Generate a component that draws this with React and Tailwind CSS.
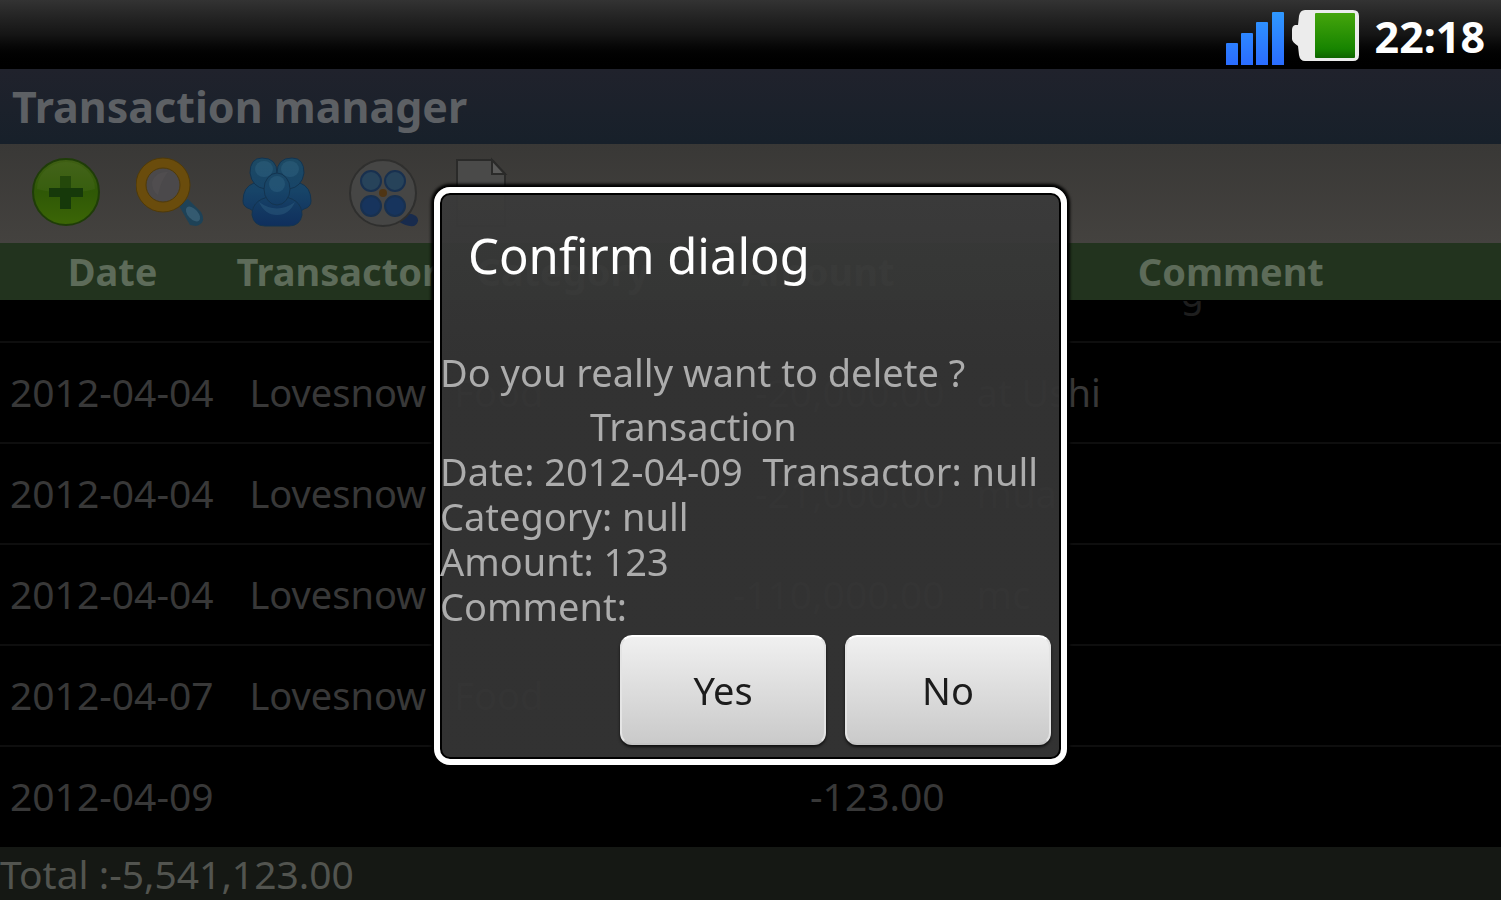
import { useState } from 'react'

const COLUMNS = [
  { name: 'Date', width: 'w-[15%]' },
  { name: 'Transactor', width: 'w-[15%]' },
  { name: 'Category', width: 'w-[15%]' },
  { name: 'Amount', width: 'w-[19%]' },
  { name: 'Comment', width: 'w-[36%]' },
]

const ROWS = [
  { date: '2012-04-04', transactor: 'Lovesnow', category: 'Food', amount: '-20,000.00', comment: 'at Ushi' },
  { date: '2012-04-04', transactor: 'Lovesnow', category: '', amount: '-21,000.00', comment: 'mua' },
  { date: '2012-04-04', transactor: 'Lovesnow', category: '', amount: '-110,000.00', comment: 'mc' },
  { date: '2012-04-07', transactor: 'Lovesnow', category: 'Food', amount: '', comment: '' },
  { date: '2012-04-09', transactor: '', category: '', amount: '-123.00', comment: '' },
]

function SignalIcon() {
  return (
    <svg width="60" height="56" viewBox="0 0 60 56" aria-hidden="true">
      <defs>
        <linearGradient id="signal" x1="0" y1="0" x2="0" y2="56" gradientUnits="userSpaceOnUse">
          <stop offset="0" stopColor="#2f9bff" />
          <stop offset="1" stopColor="#2a6cff" />
        </linearGradient>
      </defs>
      <g fill="url(#signal)">
        <rect x="1" y="34" width="12" height="23" rx="1" />
        <rect x="16" y="24" width="12" height="33" rx="1" />
        <rect x="31" y="13" width="12" height="44" rx="1" />
        <rect x="47" y="3" width="12" height="54" rx="1" />
      </g>
    </svg>
  )
}

function BatteryIcon() {
  return (
    <svg width="68" height="54" viewBox="0 0 68 54" aria-hidden="true">
      <defs>
        <linearGradient id="charge" x1="0" y1="0" x2="0" y2="1">
          <stop offset="0" stopColor="#45a50c" />
          <stop offset="0.8" stopColor="#178400" />
          <stop offset="1" stopColor="#0f6400" />
        </linearGradient>
      </defs>
      <path d="M14 1H62Q68 1 68 7V46Q68 52 62 52H14Q9 52 8 46L7 37Q1 33 1 30V21Q1 17 4 16H7L8 7Q9 1 14 1Z" fill="#ececec" />
      <rect x="24" y="4" width="40" height="45" rx="1" fill="url(#charge)" />
    </svg>
  )
}

function AddIcon() {
  return (
    <svg width="72" height="72" viewBox="0 0 72 72" aria-hidden="true">
      <defs>
        <linearGradient id="add" x1="0" y1="0" x2="0" y2="1">
          <stop offset="0" stopColor="#3f5f14" />
          <stop offset="0.5" stopColor="#2f5806" />
          <stop offset="1" stopColor="#3c6606" />
        </linearGradient>
      </defs>
      <circle cx="36" cy="37" r="33" fill="url(#add)" stroke="#1f3d08" strokeWidth="2" />
      <path d="M7 34a29 27 0 0 1 58 0Q36 42 7 34Z" fill="#5c7a30" opacity="0.2" />
      <path d="M30 21h11v12h-11Z" fill="#24480b" />
      <path d="M19 33h34v9H41v12H30V42H19Z" fill="#16390a" />
    </svg>
  )
}

function SearchIcon() {
  return (
    <svg width="72" height="72" viewBox="0 0 72 72" aria-hidden="true">
      <path d="M42 49L52 44L65 57Q71 68 60 71L54 70Z" fill="#1e4257" />
      <ellipse cx="57" cy="59" rx="5" ry="9" transform="rotate(-42 57 59)" fill="#345a70" />
      <circle cx="27" cy="30" r="22" fill="#4b494b" stroke="#6a4c0c" strokeWidth="10" />
      <circle cx="27" cy="30" r="27" fill="none" stroke="#503a08" strokeWidth="1" />
      <circle cx="27" cy="30" r="17" fill="none" stroke="#503a08" strokeWidth="1" />
      <path d="M16 27Q20 16 32 17Q25 25 22 40Q16 36 16 27Z" fill="#585656" opacity="0.4" />
    </svg>
  )
}

function PeopleIcon() {
  return (
    <svg width="72" height="72" viewBox="0 0 72 72" aria-hidden="true">
      <defs>
        <linearGradient id="people" x1="0" y1="0" x2="0" y2="72" gradientUnits="userSpaceOnUse">
          <stop offset="0" stopColor="#1d4a63" />
          <stop offset="0.5" stopColor="#174468" />
          <stop offset="1" stopColor="#0f2e5c" />
        </linearGradient>
      </defs>
      <g fill="url(#people)" stroke="#133450" strokeWidth="1">
        <path d="M1 46Q1 32 12 28L30 26L34 56Q14 60 8 54Q1 52 1 46Z" />
        <path d="M69 46Q69 32 58 28L40 26L36 56Q56 60 62 54Q69 52 69 46Z" />
        <path d="M8 18Q8 3 20 3Q35 3 35 18Q35 34 23 34Q10 32 8 18Z" />
        <path d="M62 18Q62 3 50 3Q35 3 35 18Q35 34 47 34Q60 32 62 18Z" />
        <path d="M10 60Q10 42 35 41Q60 42 60 60Q58 71 47 71H23Q12 71 10 60Z" />
        <ellipse cx="35" cy="34" rx="13" ry="16" />
      </g>
      <g fill="#3d7391" opacity="0.3">
        <ellipse cx="22" cy="14" rx="9" ry="8" />
        <ellipse cx="48" cy="14" rx="9" ry="8" />
        <ellipse cx="35" cy="29" rx="8" ry="8" />
        <path d="M17 47Q35 60 53 47Q47 60 35 60Q23 60 17 47Z" />
      </g>
    </svg>
  )
}

function ReelIcon() {
  return (
    <svg width="72" height="72" viewBox="0 0 72 72" aria-hidden="true">
      <path d="M50 66Q58 54 68 61Q73 66 66 71Q58 72 50 66Z" fill="#182b4d" />
      <circle cx="35" cy="38" r="33" fill="#464645" stroke="#2f2f2e" strokeWidth="2" />
      <circle cx="23" cy="26" r="10" fill="#27435a" stroke="#18304f" strokeWidth="2" />
      <circle cx="47" cy="26" r="10" fill="#27435a" stroke="#18304f" strokeWidth="2" />
      <circle cx="23" cy="51" r="10" fill="#17345d" stroke="#18304f" strokeWidth="2" />
      <circle cx="47" cy="51" r="10" fill="#17345d" stroke="#18304f" strokeWidth="2" />
      <circle cx="35" cy="38" r="4" fill="#4f3514" />
    </svg>
  )
}

function PageIcon() {
  return (
    <svg width="72" height="72" viewBox="0 0 72 72" aria-hidden="true">
      <path d="M3 5H38L51 19V71H3Z" fill="#4a4a49" stroke="#2a2a29" strokeWidth="2" />
      <path d="M38 5V19H51Z" fill="#5a5a59" stroke="#2a2a29" strokeWidth="2" />
    </svg>
  )
}

const TOOLS = [
  { label: 'Add', Icon: AddIcon },
  { label: 'Search', Icon: SearchIcon },
  { label: 'Transactors', Icon: PeopleIcon },
  { label: 'Categories', Icon: ReelIcon },
  { label: 'Report', Icon: PageIcon },
]

function StatusBar() {
  return (
    <div className="flex h-[69px] shrink-0 items-start justify-end bg-linear-to-b from-[#333333] via-[#151515] to-black pt-[9px] pr-4">
      <SignalIcon />
      <span className="ml-[6px]">
        <BatteryIcon />
      </span>
      <span className="ml-4 text-[43px] leading-[56px] font-bold text-white">22:18</span>
    </div>
  )
}

function TransactionTable() {
  return (
    <table className="w-full table-fixed border-collapse text-[38px] leading-[46px] text-[#383838]">
      <thead>
        <tr className="h-[57px] bg-[#22331e] text-[#5d6b59]">
          {COLUMNS.map((col) => (
            <th key={col.name} scope="col" className={`${col.width} p-0 pb-[2px] text-center font-bold`}>
              {col.name}
            </th>
          ))}
        </tr>
      </thead>
      <tbody>
        {/* Row scrolled mostly out of view under the header */}
        <tr className="h-[42px] border-b-2 border-[#0e0e0e]">
          <td colSpan={4} />
          <td className="p-0">
            <div className="h-[40px] overflow-hidden pl-[220px]">
              <p className="-mt-8 text-[#1e1e1e]">g</p>
            </div>
          </td>
        </tr>
        {ROWS.map((row, i) => (
          <tr key={i} className="h-[101px] border-b-2 border-[#0e0e0e] last:border-b-0">
            <td className="pt-0 pb-[2px] pl-[10px] text-[39px] whitespace-nowrap">{row.date}</td>
            <td className="p-0 pb-[2px] text-center">{row.transactor}</td>
            <td className="pt-0 pb-[2px] pl-1">{row.category}</td>
            <td className="pt-0 pr-4 pb-[2px] text-right text-[39px] whitespace-nowrap">{row.amount}</td>
            <td className="pt-0 pb-[2px] pl-4">{row.comment}</td>
          </tr>
        ))}
      </tbody>
    </table>
  )
}

function DialogButton({ children, onClick }) {
  return (
    <button
      type="button"
      onClick={onClick}
      className="h-[110px] w-[206px] rounded-xl border-2 border-t-white border-x-[#e4e4e4] border-b-[#c4c4c4] bg-linear-to-b from-[#f0f0f0] to-[#cacaca] text-[38px] text-[#1c1c1c] shadow-[0_2px_3px_rgba(0,0,0,0.7)]"
    >
      {children}
    </button>
  )
}

function ConfirmDialog({ onClose }) {
  return (
    <div className="fixed inset-0 flex items-center justify-center pt-[52px]">
      <div
        role="dialog"
        aria-modal="true"
        aria-labelledby="confirm-title"
        className="w-[633px] rounded-2xl border-[6px] border-white bg-linear-to-b from-[#3a3a3a]/95 via-[#343434]/96 via-30% to-[#343434]/96 bg-clip-padding pb-[14px] shadow-[0_0_3px_3px_#000,inset_0_0_0_2px_#000]"
      >
        <h2 id="confirm-title" className="px-7 pt-8 text-[49px] leading-[60px] text-white">
          Confirm dialog
        </h2>
        <div className="pt-[65px] text-[38px] leading-[45px] text-[#acacac]">
          <p className="pb-[9px]">Do you really want to delete ?</p>
          <p className="pl-[150px]">Transaction</p>
          <p className="whitespace-pre">Date: 2012-04-09  Transactor: null</p>
          <p>Category: null</p>
          <p>Amount: 123</p>
          <p>Comment:</p>
        </div>
        <div className="flex justify-end gap-[19px] pt-[6px] pr-[10px]">
          <DialogButton onClick={onClose}>Yes</DialogButton>
          <DialogButton onClick={onClose}>No</DialogButton>
        </div>
      </div>
    </div>
  )
}

export default function App() {
  const [open, setOpen] = useState(true)

  return (
    <div className="flex min-h-screen flex-col bg-black font-['Noto_Sans','Open_Sans',sans-serif]">
      <StatusBar />
      <header className="flex h-[75px] shrink-0 items-center bg-linear-to-b from-[#20222c] to-[#17202a] pl-3">
        <h1 className="text-[43px] leading-[56px] font-bold text-[#5d6064]">Transaction manager</h1>
      </header>
      <nav className="flex h-[99px] shrink-0 items-center gap-[34px] bg-linear-to-b from-[#393836] to-[#44423f] pb-[6px] pl-[30px]">
        {TOOLS.map(({ label, Icon }) => (
          <button key={label} type="button" aria-label={label}>
            <Icon />
          </button>
        ))}
      </nav>
      <main className="grow">
        <TransactionTable />
      </main>
      <footer className="h-[53px] shrink-0 bg-[#151814] text-[39px] leading-[53px] text-[#52544f]">
        Total :-5,541,123.00
      </footer>
      {open && <ConfirmDialog onClose={() => setOpen(false)} />}
    </div>
  )
}
